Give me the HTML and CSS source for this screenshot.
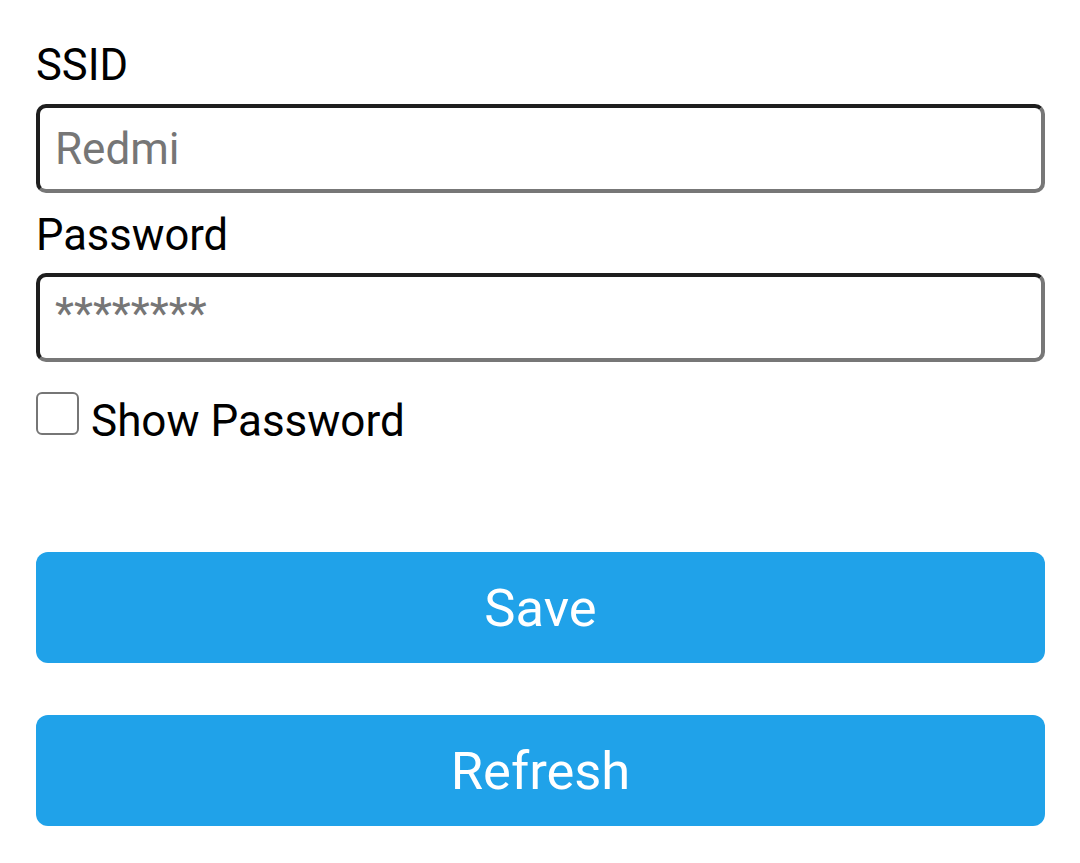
FILE: index.html
```html
<!DOCTYPE html>
<html>
<head>
<meta charset="utf-8">
<link rel="stylesheet" href="styles.css">
</head>
<body>
<div class="form">
  <div class="label">SSID</div>
  <input class="field" type="text" placeholder="Redmi">
  <div class="label label-pass">Password</div>
  <input class="field field-pass" type="text" placeholder="********">
  <div class="check-row">
    <span class="checkbox"></span>
    <span class="check-text">Show Password</span>
  </div>
  <button class="btn btn-save">Save</button>
  <button class="btn btn-refresh">Refresh</button>
</div>
</body>
</html>
```

FILE: styles.css
```css
html, body {
  margin: 0;
  padding: 0;
  background: #ffffff;
}
body {
  font-family: Roboto, "Liberation Sans", sans-serif;
  color: #000;
}
.form {
  display: flex;
  flex-direction: column;
  padding: 38px 35px 0 36px;
}
.label {
  font-size: 43.5px;
  line-height: 56px;
  height: 56px;
}
.label-pass {
  margin-top: 15px;
}
.field {
  box-sizing: border-box;
  height: 89px;
  margin: 10px 0 0 0;
  border: 4px solid;
  border-color: #1e1e1e #777777 #777777 #1e1e1e;
  border-radius: 10px;
  padding: 0 0 0 15px;
  font-family: Roboto, "Liberation Sans", sans-serif;
  font-size: 44px;
  outline: none;
  background: #fff;
}
.field::placeholder {
  color: #767676;
}
.field-pass {
  margin-top: 9px;
  padding-bottom: 8px;
}
.check-row {
  display: flex;
  align-items: flex-start;
  margin-top: 30px;
  gap: 12px;
}
.checkbox {
  box-sizing: border-box;
  width: 43px;
  height: 43px;
  border: 2px solid #767676;
  border-radius: 6px;
  background: #fff;
  flex: none;
}
.check-text {
  font-size: 44px;
  line-height: 45px;
  margin-top: 7px;
}
.btn {
  box-sizing: border-box;
  height: 111px;
  border: none;
  border-radius: 12px;
  background: #20a2e9;
  color: #ffffff;
  font-family: Roboto, "Liberation Sans", sans-serif;
  font-size: 52.5px;
  padding: 0;
}
.btn-save {
  margin-top: 108px;
}
.btn-refresh {
  margin-top: 52px;
}
```
